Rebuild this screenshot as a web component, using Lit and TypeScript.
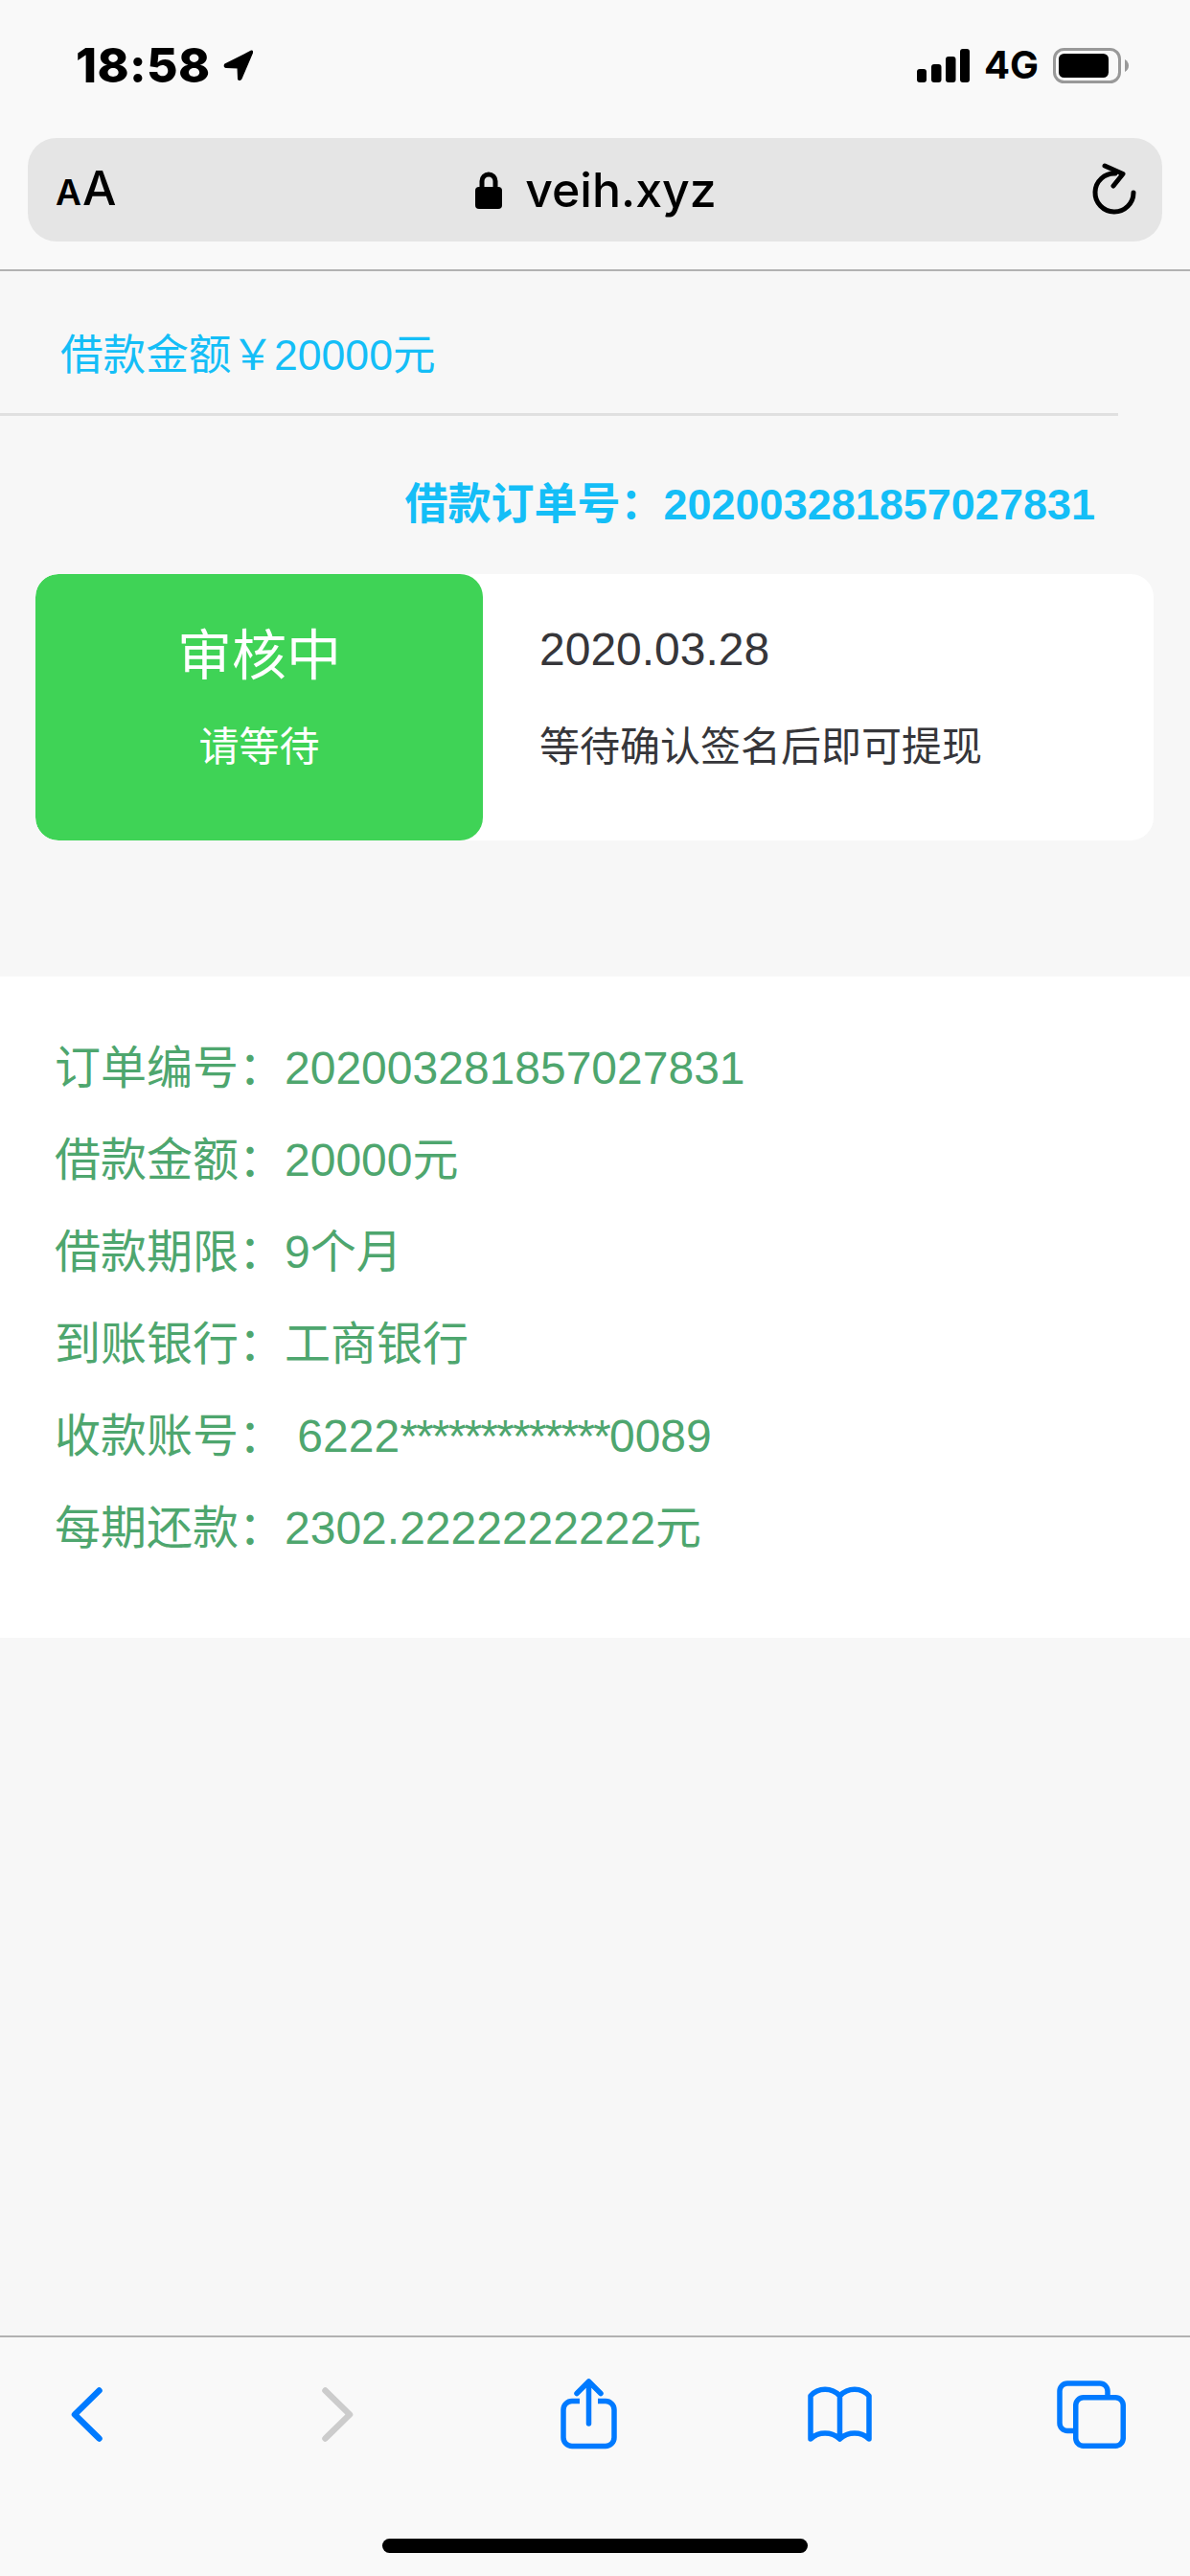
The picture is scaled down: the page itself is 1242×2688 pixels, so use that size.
import { LitElement, html, css } from "lit";
import { customElement } from "lit/decorators.js";

const rows: [string, unknown][] = [
  ["订单编号：", "202003281857027831"],
  ["借款金额：", "20000元"],
  ["借款期限：", "9个月"],
  ["到账银行：", "工商银行"],
  ["收款账号：", html`\u00a06222<span class="mask">*************</span>0089`],
  ["每期还款：", "2302.2222222222元"],
];

@customElement("app-root")
export class AppRoot extends LitElement {
  static styles = css`
    :host {
      display: flex;
      flex-direction: column;
      height: 2688px;
      background: #f7f7f7;
      font-family: "Liberation Sans", "Noto Sans CJK SC", sans-serif;
      overflow: hidden;
    }
    svg { display: block; flex: none; }
    .chrome {
      background: #f9f9f9;
      border-bottom: 2px solid #b2b2b2;
      height: 281px;
    }
    .status {
      height: 144px;
      box-sizing: border-box;
      padding: 48px 64px 0 79px;
      display: flex;
      justify-content: space-between;
      align-items: flex-start;
    }
    .status-group { display: flex; align-items: center; height: 40px; }
    .time {
      font: 800 50px/40px Inter, sans-serif;
      color: #000;
      letter-spacing: 0.4px;
    }
    .arrow { margin-left: 13px; }
    .net {
      font: 700 40px/40px Inter, sans-serif;
      color: #000;
      margin: 0 15px 0 15px;
    }
    .url {
      height: 108px;
      margin: 0 29px;
      border-radius: 30px;
      background: #e5e5e5;
      display: grid;
      grid-template-columns: 1fr auto 1fr;
      align-items: center;
      padding: 0 27px 0 29px;
    }
    .aa {
      display: flex;
      align-items: baseline;
      gap: 1px;
      font-family: Inter, sans-serif;
      font-weight: 600;
      color: #000;
    }
    .aa .s { font-size: 37px; line-height: 50px; }
    .aa .b { font-size: 50px; line-height: 50px; font-weight: 500; }
    .host {
      display: flex;
      align-items: center;
      gap: 24px;
      font: 500 50px/60px Inter, sans-serif;
      color: #000;
    }
    .reload { justify-self: end; }
    .amount {
      font-size: 44.6px;
      line-height: 50px;
      color: #14bef7;
      padding: 63px 0 35px 63px;
    }
    .divider {
      height: 3px;
      width: 1167px;
      background: #e0e0e0;
    }
    .order {
      font-size: 45px;
      line-height: 60px;
      font-weight: 700;
      color: #14bef7;
      text-align: right;
      margin-top: 63px;
      padding-right: 99px;
      margin-bottom: -1px;
    }
    .card {
      margin: 43px 38px 0 37px;
      height: 278px;
      border-radius: 24px;
      background: #fff;
      display: flex;
      overflow: hidden;
    }
    .badge {
      width: 467px;
      background: #3fd356;
      border-radius: 24px;
      color: #fff;
      text-align: center;
      padding-top: 49px;
      box-sizing: border-box;
    }
    .badge-title { font-size: 57px; line-height: 72px; }
    .badge-sub { font-size: 42px; line-height: 60px; margin-top: 30px; }
    .info { padding: 49px 0 0 59px; color: #36363a; }
    .info-date { font-size: 48px; line-height: 60px; }
    .info-text { font-size: 42px; line-height: 60px; margin-top: 42px; }
    .details {
      margin-top: 142px;
      background: #fff;
      padding: 48px 0 66px 57px;
      color: #4ea66e;
      font-size: 48px;
      line-height: 96px;
    }
    .mask { letter-spacing: -1.85px; }
    .spacer { flex: 1; }
    .toolbar {
      background: #f9f9f9;
      border-top: 2px solid #b2b2b2;
      height: 249px;
    }
    .icons {
      height: 160px;
      display: flex;
      justify-content: space-between;
      align-items: center;
      padding: 0 53px 0 40px;
    }
    .slot { width: 100px; display: flex; justify-content: center; }
    .home {
      width: 444px;
      height: 15px;
      margin: 50px auto 0;
      border-radius: 8px;
      background: #000;
    }
  `;

  render() {
    return html`
      <div class="chrome">
        <div class="status">
          <div class="status-group">
            <span class="time">18:58</span>
            <svg class="arrow" width="31" height="32" viewBox="0 0 31 32">
              <path fill="#000" stroke="#000" stroke-width="2" stroke-linejoin="round" d="M29.500 1.500 2 15.500q-1 2 1 2.500l12.500 .5 .5 12q2 1 2.500-.5L30 3q.5-1.800-.5-1.500z"/>
            </svg>
          </div>
          <div class="status-group">
            <svg width="55" height="35" viewBox="0 0 55 35" fill="#000">
              <rect x="0" y="21" width="10" height="14" rx="3"/>
              <rect x="15" y="16" width="10.500" height="19" rx="3"/>
              <rect x="30" y="8" width="10.500" height="27" rx="3"/>
              <rect x="45" y="0" width="10" height="35" rx="3"/>
            </svg>
            <span class="net">4G</span>
            <svg width="79" height="37" viewBox="0 0 79 37">
              <rect x="1.500" y="1.500" width="68" height="34" rx="10" fill="none" stroke="#999" stroke-width="3"/>
              <rect x="6" y="6" width="52" height="25" rx="5.500" fill="#000"/>
              <path d="M75 12v13q4-2.500 4-6.500T75 12z" fill="#999"/>
            </svg>
          </div>
        </div>
        <div class="url">
          <div class="aa"><span class="s">A</span><span class="b">A</span></div>
          <div class="host">
            <svg width="28" height="40" viewBox="0 0 28 40">
              <path d="M7 20V11a7 7 0 0 1 14 0v9" fill="none" stroke="#000" stroke-width="5"/>
              <rect x="0" y="17" width="28" height="23" rx="4" fill="#000"/>
            </svg>
            <span>veih.xyz</span>
          </div>
          <svg class="reload" width="46" height="56" viewBox="0 0 46 56">
            <path d="M24 11A20 20 0 1 0 43 31" fill="none" stroke="#000" stroke-width="5" stroke-linecap="round"/>
            <path d="M13 3l19 8.500L22 24" fill="none" stroke="#000" stroke-width="5" stroke-linecap="round" stroke-linejoin="round"/>
          </svg>
        </div>
      </div>

      <div class="amount">借款金额￥20000元</div>
      <div class="divider"></div>
      <div class="order">借款订单号：202003281857027831</div>
      <div class="card">
        <div class="badge">
          <div class="badge-title">审核中</div>
          <div class="badge-sub">请等待</div>
        </div>
        <div class="info">
          <div class="info-date">2020.03.28</div>
          <div class="info-text">等待确认签名后即可提现</div>
        </div>
      </div>

      <div class="details">
        ${rows.map(([k, v]) => html`<div>${k}${v}</div>`)}
      </div>
      <div class="spacer"></div>

      <div class="toolbar">
        <div class="icons">
          <div class="slot">
            <svg width="33" height="57" viewBox="0 0 33 57" fill="none" stroke="#007aff" stroke-width="6.500" stroke-linecap="round" stroke-linejoin="round">
              <path d="M29.500 3.500 4 28.500l25.500 25"/>
            </svg>
          </div>
          <div class="slot">
            <svg width="33" height="57" viewBox="0 0 33 57" fill="none" stroke="#cccccc" stroke-width="6.500" stroke-linecap="round" stroke-linejoin="round">
              <path d="M3.500 3.500 29 28.500l-25.500 25"/>
            </svg>
          </div>
          <div class="slot">
            <svg width="59" height="74" viewBox="0 0 59 74" fill="none" stroke="#007aff" stroke-width="5.500" stroke-linecap="round" stroke-linejoin="round">
              <path d="M20 23.500H12a9 9 0 0 0-9 9v29a9 9 0 0 0 9 9h35a9 9 0 0 0 9-9v-29a9 9 0 0 0-9-9h-8" stroke-linecap="butt"/>
              <path d="M29.500 47V3M17 15.500 29.500 3 42 15.500"/>
            </svg>
          </div>
          <div class="slot">
            <svg width="67" height="58" viewBox="0 0 67 58" fill="none" stroke="#007aff" stroke-width="5.500" stroke-linecap="round" stroke-linejoin="round">
              <path d="M33.500 10C25 1 11 1 3 10v45c8-8 22-8 30.500 0V10C42 1 56 1 64 10v45c-8-8-22-8-30.500 0"/>
            </svg>
          </div>
          <div class="slot">
            <svg width="72" height="71" viewBox="0 0 72 71" fill="none" stroke="#007aff" stroke-width="5.500" stroke-linecap="round" stroke-linejoin="round">
              <rect x="19.750" y="17.750" width="49.500" height="50.500" rx="8"/>
              <path d="M17 52.500h-6a8 8 0 0 1-8-8V11a8 8 0 0 1 8-8h34a8 8 0 0 1 8 8v4"/>
            </svg>
          </div>
        </div>
        <div class="home"></div>
      </div>
    `;
  }
}
